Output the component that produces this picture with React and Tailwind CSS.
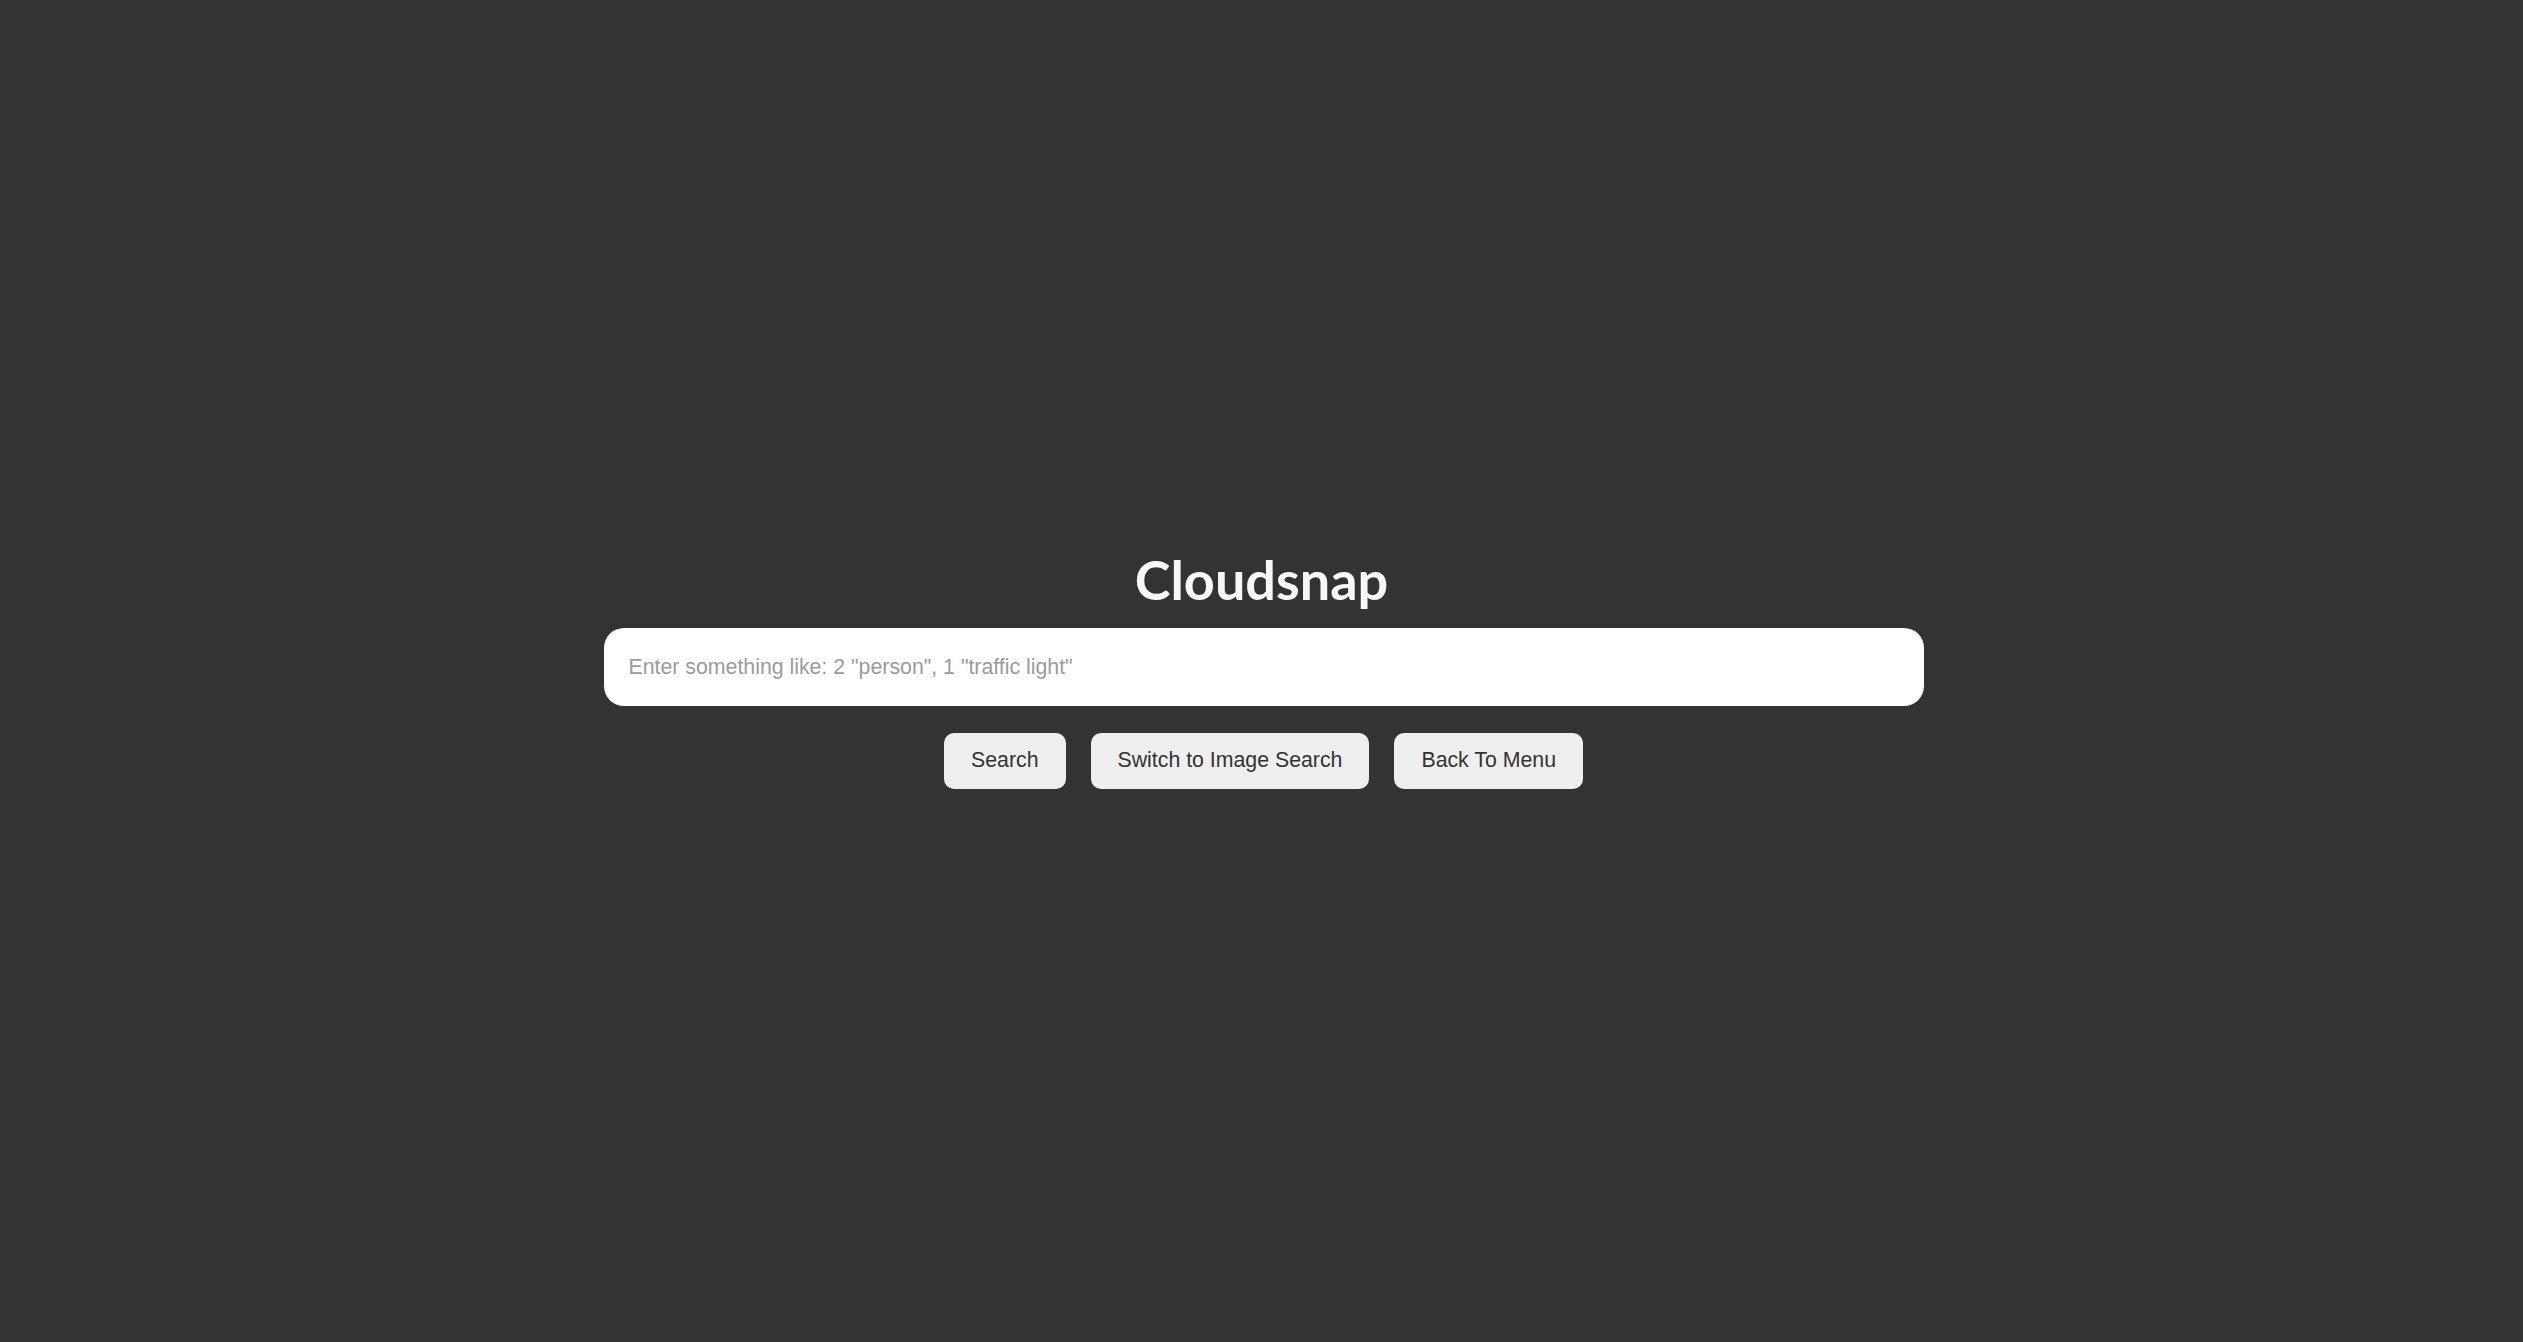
import { useState } from "react";

export default function App() {
  const [query, setQuery] = useState("");

  return (
    <div className="h-screen w-full bg-[#333333] flex flex-col items-center justify-center">
      <h1 className="text-[54px] leading-none font-bold text-[#f7f7f7] font-['Lato',sans-serif]">
        Cloudsnap
      </h1>

      {/* Search box */}
      <input
        type="text"
        value={query}
        onChange={(e) => setQuery(e.target.value)}
        placeholder={'Enter something like: 2 "person", 1 "traffic light"'}
        className="mt-[21px] ml-[4px] w-[1320px] h-[78px] rounded-[20px] bg-white pl-[25px] text-[21.3px] text-[#333] placeholder:text-[#9b9b9b] outline-none font-['Liberation_Sans',Arial,sans-serif]"
      />

      {/* Actions */}
      <div className="mt-[27px] ml-[4px] flex gap-[25px] font-['Liberation_Sans',Arial,sans-serif]">
        <button className="h-[56px] px-[27px] rounded-[10px] bg-[#efefef] text-[21.3px] text-[#333]">
          Search
        </button>
        <button className="h-[56px] px-[27px] rounded-[10px] bg-[#efefef] text-[21.3px] text-[#333]">
          Switch to Image Search
        </button>
        <button className="h-[56px] px-[27px] rounded-[10px] bg-[#efefef] text-[21.3px] text-[#333]">
          Back To Menu
        </button>
      </div>
    </div>
  );
}
